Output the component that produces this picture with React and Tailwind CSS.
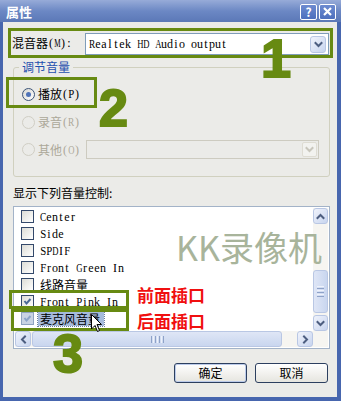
import React from "react";

const SQUEEZE = {
  M: "scale-x-[0.6]",
  H: "scale-x-[0.72]",
  D: "scale-x-[0.72]",
  A: "scale-x-[0.72]",
  G: "scale-x-[0.72]",
  O: "scale-x-[0.72]",
  R: "scale-x-[0.78]",
  C: "scale-x-[0.78]",
  T: "scale-x-[0.85]",
  P: "scale-x-[0.9]",
  F: "scale-x-[0.9]",
  S: "scale-x-[0.9]",
  m: "scale-x-[0.68]",
};

function Mono({ children }) {
  const chars = Array.from(String(children));
  return (
    <span className="inline-flex font-['Liberation_Serif',serif] text-[12px]">
      {chars.map((c, i) => (
        <span key={i} className="inline-flex w-[6px] justify-center whitespace-pre">
          <span className={`inline-block ${SQUEEZE[c] || ""}`}>{c}</span>
        </span>
      ))}
    </span>
  );
}

function Chev({ dir = "down", color = "#4d5e80" }) {
  const d = {
    up: "M1.5 6 L4.5 3 L7.5 6",
    down: "M1.5 3 L4.5 6 L7.5 3",
    left: "M6 1.5 L3 4.5 L6 7.5",
    right: "M3 1.5 L6 4.5 L3 7.5",
  }[dir];
  return (
    <svg width="9" height="9" viewBox="0 0 9 9">
      <path d={d} fill="none" stroke={color} strokeWidth="2" strokeLinecap="square" />
    </svg>
  );
}

function SBtn({ dir, className = "" }) {
  return (
    <div
      className={`flex shrink-0 items-center justify-center rounded-[3px] border border-[#b9c7e4] bg-linear-to-br from-[#f0f3fb] to-[#c8d5ef] ${className}`}
    >
      <Chev dir={dir} />
    </div>
  );
}

function Radio({ on, disabled }) {
  return (
    <span
      className={`flex h-[13px] w-[13px] shrink-0 items-center justify-center rounded-full border ${
        disabled ? "border-[#d0cec4] bg-[#ebebe8]" : "border-[#3d5478] bg-linear-to-br from-[#d8d8d2] to-white"
      }`}
    >
      {on && <span className="h-[5px] w-[5px] rounded-full bg-[#4f73b8]" />}
    </span>
  );
}

function Check({ checked, dim }) {
  return (
    <span
      className={`flex h-[13px] w-[13px] shrink-0 items-center justify-center border ${
        dim ? "border-[#8ea2bf] bg-[#c9d3e3]" : "border-[#34496b] bg-linear-to-br from-[#dcdcd6] to-white"
      }`}
    >
      {checked && (
        <svg width="9" height="9" viewBox="0 0 9 9">
          <path
            d="M1.5 4 L3.5 6.5 L7.5 2"
            fill="none"
            stroke={dim ? "#8ca4c8" : "#4a6895"}
            strokeWidth="2"
          />
        </svg>
      )}
    </span>
  );
}

function TitleBtn({ children }) {
  return (
    <div className="flex h-[16px] w-[17px] items-center justify-center rounded-[2px] border border-white bg-linear-to-b from-[#6d8bd0] to-[#4d6fbd] text-[12px] font-bold leading-none text-white">
      {children}
    </div>
  );
}

const items = [
  { t: "Center", mono: true },
  { t: "Side", mono: true },
  { t: "SPDIF", mono: true },
  { t: "Front Green In", mono: true },
  { t: "线路音量" },
  { t: "Front Pink In", mono: true, checked: true },
  { t: "麦克风音量", checked: true, dim: true, sel: true },
];

export default function App() {
  return (
    <div className="relative h-[401px] w-[341px] overflow-hidden bg-[#ebebe8] font-['Noto_Sans_CJK_SC',sans-serif] text-[12px] leading-[14px] text-black">
      {/* title bar */}
      <div className="flex h-[22px] items-center justify-between bg-linear-to-b from-[#97abd8] via-[#6c88c4] to-[#5b78b7] pl-[6px] pr-[5px]">
        <span className="text-[13px] font-bold leading-none text-white">属性</span>
        <div className="flex gap-[2px] pt-[1px]">
          <TitleBtn>?</TitleBtn>
          <TitleBtn>
            <svg width="9" height="9" viewBox="0 0 9 9">
              <path d="M1 1 L8 8 M8 1 L1 8" stroke="white" strokeWidth="2.2" />
            </svg>
          </TitleBtn>
        </div>
      </div>

      {/* body */}
      <div className="flex h-[379px] flex-col border-b-[4px] border-l-[3px] border-r-[4px] border-[#4766ae]">
        {/* mixer row */}
        <div className="ml-[5px] mr-[4px] mt-[6px] flex h-[30px] border-[3px] border-[#678a12] pl-[1px] pr-[1px] pt-[2px]">
          <div className="mt-[3px] flex h-[14px] items-center">
            混音器<Mono>(M):</Mono>
          </div>
          <div className="ml-auto flex h-[22px] w-[244px] items-center border border-[#7f9db9] bg-white pl-[3px] pr-[2px]">
            <Mono>Realtek HD Audio output</Mono>
            <SBtn dir="down" className="ml-auto h-[17px] w-[16px]" />
          </div>
        </div>

        {/* group */}
        <fieldset className="ml-[10px] mr-[7px] mt-[2px] rounded-[3px] border border-[#d0d0bf] pb-[17px] pl-[8px] pr-[10px] pt-[11px]">
          <legend className="ml-[-3px] px-[3px] leading-[14px] text-[#1f4fae]">调节音量</legend>
          <div className="flex h-[18px] items-center gap-[3px]">
            <Radio on />
            <span className="flex items-center">
              播放<Mono>(P)</Mono>
            </span>
          </div>
          <div className="mt-[10px] flex h-[18px] items-center gap-[3px] text-[#aca899]">
            <Radio disabled />
            <span className="flex items-center">
              录音<Mono>(R)</Mono>
            </span>
          </div>
          <div className="mt-[9px] flex h-[19px] items-center gap-[3px] text-[#aca899]">
            <Radio disabled />
            <span className="flex items-center">
              其他<Mono>(O)</Mono>
            </span>
            <div className="ml-auto flex h-[19px] w-[233px] items-center justify-end border border-[#cdcbc0] bg-[#ebebe8] pr-[1px]">
              <div className="flex h-[15px] w-[15px] items-center justify-center rounded-[2px] border border-[#dedcd3] bg-[#f2f2ef]">
                <Chev dir="down" color="#c8c6bc" />
              </div>
            </div>
          </div>
        </fieldset>

        <div className="ml-[10px] mt-[9px] h-[14px]">显示下列音量控制:</div>

        {/* list */}
        <div className="ml-[10px] mr-[7px] mt-[6px] flex h-[143px] flex-col border border-[#a3b3c8] bg-white p-[1px]">
          <div className="flex h-[123px]">
            <div className="flex flex-1 flex-col">
              {items.map((it) => (
                <div key={it.t} className="flex h-[17px] items-center gap-[4px] pl-[6px]">
                  <Check checked={it.checked} dim={it.dim} />
                  <span
                    className={`flex h-[15px] items-center pl-[2px] pr-[4px] ${
                      it.sel ? "bg-[#a6bbdc] outline outline-1 outline-dotted outline-[#6d7f9c]" : ""
                    }`}
                  >
                    {it.mono ? <Mono>{it.t}</Mono> : it.t}
                  </span>
                </div>
              ))}
            </div>
            <div className="flex w-[15px] flex-col bg-[#f6f5f1]">
              <SBtn dir="up" className="h-[16px] w-[15px]" />
              <div className="h-[46px]" />
              <div className="flex h-[43px] w-[15px] flex-col items-center justify-center gap-[1px] rounded-[3px] border border-[#b9c7e4] bg-linear-to-r from-[#dfe6f6] to-[#c9d6ef]">
                <div className="h-px w-[7px] bg-[#eef2fb]" />
                <div className="h-px w-[7px] bg-[#8ea2c8]" />
                <div className="h-px w-[7px] bg-[#eef2fb]" />
                <div className="h-px w-[7px] bg-[#8ea2c8]" />
                <div className="h-px w-[7px] bg-[#eef2fb]" />
                <div className="h-px w-[7px] bg-[#8ea2c8]" />
              </div>
              <div className="flex-1" />
              <SBtn dir="down" className="h-[16px] w-[15px]" />
            </div>
          </div>
          <div className="flex h-[16px] bg-[#f6f5f1]">
            <SBtn dir="left" className="h-[16px] w-[16px]" />
            <div className="ml-[1px] flex h-[16px] w-[250px] items-center justify-center gap-[1px] rounded-[3px] border border-[#b9c7e4] bg-linear-to-b from-[#dfe6f6] to-[#c9d6ef]">
              <div className="h-[7px] w-px bg-[#8ea2c8]" />
              <div className="h-[7px] w-px bg-[#eef2fb]" />
              <div className="h-[7px] w-px bg-[#8ea2c8]" />
              <div className="h-[7px] w-px bg-[#eef2fb]" />
              <div className="h-[7px] w-px bg-[#8ea2c8]" />
              <div className="h-[7px] w-px bg-[#eef2fb]" />
              <div className="h-[7px] w-px bg-[#8ea2c8]" />
            </div>
            <div className="flex-1" />
            <SBtn dir="right" className="h-[16px] w-[16px]" />
            <div className="w-[15px]" />
          </div>
        </div>

        {/* buttons */}
        <div className="mr-[9px] mt-[14px] flex justify-end gap-[8px]">
          <button className="flex h-[20px] w-[73px] items-center justify-center rounded-[3px] border border-[#2c3f5f] bg-linear-to-b from-white to-[#e6e5df] shadow-[inset_0_0_0_1px_#bccbea]">
            确定
          </button>
          <button className="flex h-[20px] w-[73px] items-center justify-center rounded-[3px] border border-[#2c3f5f] bg-linear-to-b from-white to-[#e6e5df]">
            取消
          </button>
        </div>
      </div>

      {/* annotations */}
      <div className="absolute left-[261px] top-[38px] font-['Liberation_Sans',sans-serif] text-[54px] font-bold leading-[40px] text-[#678a12] [-webkit-text-stroke:2px_#678a12]">
        1
      </div>
      <div className="absolute left-[6px] top-[77px] h-[31px] w-[91px] border-[3px] border-[#678a12]" />
      <div className="absolute left-[99px] top-[89px] font-['Liberation_Sans',sans-serif] text-[52px] font-bold leading-[38px] text-[#678a12] [-webkit-text-stroke:2px_#678a12]">
        2
      </div>
      <div className="absolute left-[176px] top-[230px] text-[34px] leading-none text-[#a8b49b]">KK录像机</div>
      <div className="absolute left-[137px] top-[286px] text-[17px] font-bold leading-none text-[#f01010]">前面插口</div>
      <div className="absolute left-[137px] top-[312px] text-[17px] font-bold leading-none text-[#f01010]">后面插口</div>
      <div className="absolute left-[9px] top-[290px] h-[19px] w-[120px] border-[3px] border-[#678a12]" />
      <div className="absolute left-[11px] top-[309px] h-[22px] w-[118px] border-[3px] border-[#678a12]" />
      <div className="absolute left-[53px] top-[333px] font-['Liberation_Sans',sans-serif] text-[54px] font-bold leading-[40px] text-[#678a12] [-webkit-text-stroke:2px_#678a12]">
        3
      </div>
      <svg className="absolute left-[91px] top-[314px]" width="12" height="19" viewBox="0 0 12 19">
        <path d="M0.5 0.5 L0.5 15 L4 11.5 L6.5 17.5 L8.5 16.5 L6 10.5 L10.5 10.5 Z" fill="white" stroke="black" />
      </svg>
    </div>
  );
}
